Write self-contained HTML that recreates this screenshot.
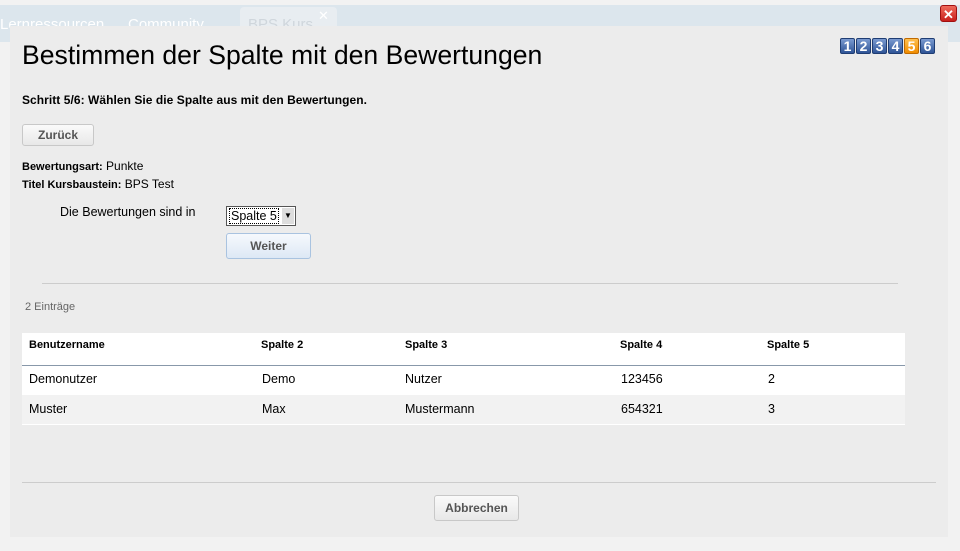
<!DOCTYPE html>
<html><head><meta charset="utf-8"><style>
body{margin:0;width:960px;height:551px;background:#f2f2f2;font-family:"Liberation Sans",sans-serif;position:relative;overflow:hidden;color:#000}
.abs{position:absolute;white-space:nowrap}
.top{left:0;top:5px;width:960px;height:37px;background:#dce6ed}
.tab{color:#fff;font-size:15px;top:16px}
.dlg{left:10px;top:26px;width:938px;height:511px;background:#ececec}
.btn{position:absolute;border:1px solid #c8c8c8;border-radius:3px;background:linear-gradient(#fafafa,#e8e8e8);font-weight:bold;font-size:12px;color:#555;text-align:center}
.num{display:inline-block;height:16px;width:15px;background:linear-gradient(#7a9ad0,#2f5597);border:1px solid #1f3d73;border-radius:2px;color:#fff;font-weight:bold;font-size:14px;line-height:15px;text-align:center;margin-right:1px;box-sizing:border-box}
.num.o{background:linear-gradient(#ffc050,#f08c00);border-color:#c06a00}
</style></head><body>
<div class="abs top"></div>
<div class="abs tab" style="left:0">Lernressourcen</div>
<div class="abs tab" style="left:128px">Community</div>
<div class="abs" style="left:240px;top:7px;width:97px;height:30px;background:#e8edf1;border-radius:4px 4px 0 0"></div>
<div class="abs tab" style="left:248px;color:#cfd6dc">BPS Kurs</div>
<div class="abs" style="left:318px;top:8px;color:#fff;font-size:13px">✕</div>
<div class="abs" style="left:940px;top:5px;width:17px;height:17px;background:linear-gradient(#ef6a5a,#c8201c);border:1px solid #a01010;border-radius:3px;color:#fff;font-size:13px;line-height:17px;text-align:center;font-weight:bold;box-sizing:border-box">✕</div>
<div class="abs dlg"></div>
<div class="abs" style="left:22px;top:40px;font-size:26.6px">Bestimmen der Spalte mit den Bewertungen</div>
<div class="abs" style="left:840px;top:38px;font-size:0"><span class="num">1</span><span class="num">2</span><span class="num">3</span><span class="num">4</span><span class="num o">5</span><span class="num">6</span></div>
<div class="abs" style="left:22px;top:93px;font-size:12px;font-weight:bold;letter-spacing:0.05px">Schritt 5/6: Wählen Sie die Spalte aus mit den Bewertungen.</div>
<div class="btn" style="left:22px;top:124px;width:70px;height:20px;line-height:20px">Zurück</div>
<div class="abs" style="left:22px;top:159px;font-size:12px"><b style="font-size:11px">Bewertungsart:</b> Punkte</div>
<div class="abs" style="left:22px;top:177px;font-size:12px"><b style="font-size:11px">Titel Kursbaustein:</b> BPS Test</div>
<div class="abs" style="left:60px;top:205px;font-size:12.5px">Die Bewertungen sind in</div>
<div class="abs" style="left:226px;top:206px;height:20px;border:1px solid #555;background:#fff;font-size:12.5px;box-sizing:border-box;width:70px"><span style="position:absolute;left:2px;top:1px;border:1px dotted #000;padding:0 1px">Spalte 5</span><span style="position:absolute;right:1px;top:1px;width:12px;height:16px;background:#ddd;font-size:8px;text-align:center;line-height:16px">▼</span></div>
<div class="btn" style="left:226px;top:233px;width:83px;height:24px;line-height:24px;border-color:#a9c3e0;background:linear-gradient(#f6f9fd,#dde8f5)">Weiter</div>
<div class="abs" style="left:42px;top:283px;width:856px;height:1px;background:#ccc"></div>
<div class="abs" style="left:25px;top:301px;font-size:11px;color:#666">2 Einträge</div>
<div class="abs" style="left:22px;top:333px;width:883px;height:92px;background:#fff"></div>
<div class="abs" style="left:22px;top:365px;width:883px;height:1px;background:#8898aa"></div>
<div class="abs" style="left:22px;top:395px;width:883px;height:29px;background:#f2f2f2"></div>
<div class="abs" style="left:0;top:339px;font-size:11px;font-weight:bold">
<span class="abs" style="left:29px">Benutzername</span><span class="abs" style="left:261px">Spalte 2</span><span class="abs" style="left:405px">Spalte 3</span><span class="abs" style="left:620px">Spalte 4</span><span class="abs" style="left:767px">Spalte 5</span></div>
<div class="abs" style="left:0;top:372px;font-size:12.5px">
<span class="abs" style="left:29px">Demonutzer</span><span class="abs" style="left:262px">Demo</span><span class="abs" style="left:405px">Nutzer</span><span class="abs" style="left:621px">123456</span><span class="abs" style="left:768px">2</span></div>
<div class="abs" style="left:0;top:402px;font-size:12.5px">
<span class="abs" style="left:29px">Muster</span><span class="abs" style="left:262px">Max</span><span class="abs" style="left:405px">Mustermann</span><span class="abs" style="left:621px">654321</span><span class="abs" style="left:768px">3</span></div>
<div class="abs" style="left:22px;top:482px;width:914px;height:1px;background:#ccc"></div>
<div class="btn" style="left:434px;top:495px;width:83px;height:24px;line-height:24px">Abbrechen</div>
</body></html>
